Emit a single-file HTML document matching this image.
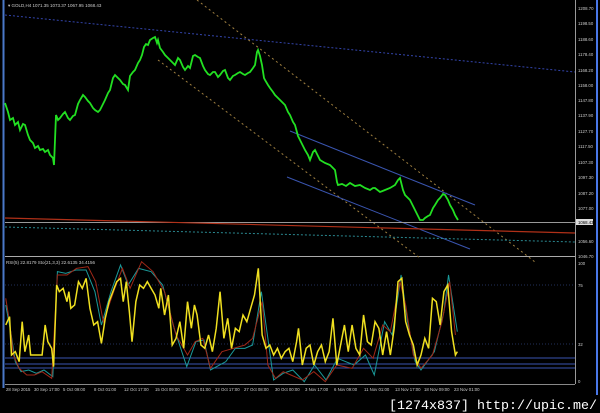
<!DOCTYPE html>
<html><head><meta charset="utf-8"><style>
html,body{margin:0;padding:0;background:#000;width:600px;height:413px;overflow:hidden}
svg{display:block}
text{font-family:"Liberation Sans",sans-serif;fill:#ccc}
</style></head><body>
<svg width="600" height="413" viewBox="0 0 600 413" xmlns="http://www.w3.org/2000/svg">
<rect width="600" height="413" fill="#000"/>
<line x1="3.5" y1="0" x2="3.5" y2="388" stroke="#4a78c8" stroke-width="2"/>
<line x1="597" y1="0" x2="597" y2="395" stroke="#4a78e8" stroke-width="2"/>
<line x1="575.5" y1="0" x2="575.5" y2="384" stroke="#999" stroke-width="1"/>
<line x1="5" y1="256.5" x2="575" y2="256.5" stroke="#aaa" stroke-width="1"/>
<line x1="5" y1="384.5" x2="575" y2="384.5" stroke="#888" stroke-width="1"/>
<line x1="5" y1="15" x2="575" y2="72" stroke="#3344aa" stroke-width="1" stroke-dasharray="2,2"/>
<line x1="197" y1="0" x2="535" y2="262" stroke="#a08040" stroke-width="1" stroke-dasharray="2,3"/>
<line x1="158" y1="60" x2="420" y2="258" stroke="#a08040" stroke-width="1" stroke-dasharray="2,3"/>
<line x1="290" y1="131" x2="475" y2="205" stroke="#3a55b0" stroke-width="1"/>
<line x1="287" y1="177" x2="470" y2="249" stroke="#3a55b0" stroke-width="1"/>
<line x1="5" y1="222.5" x2="575" y2="222.5" stroke="#999" stroke-width="1"/>
<line x1="5" y1="218" x2="575" y2="233" stroke="#b03018" stroke-width="1.2"/>
<line x1="5" y1="227" x2="575" y2="242" stroke="#2a8890" stroke-width="1" stroke-dasharray="2,2"/>
<polyline fill="none" stroke="#22e022" stroke-width="1.8" points="5,103 8,112 10,120 13,118 15,125 18,122 20,130 23,124 25,125 28,135 30,140 33,143 35,148 38,146 40,150 43,149 45,152 48,150 50,155 53,158 54,165 56,115 58,120 60,118 63,114 65,112 68,118 70,120 73,116 75,115 78,104 80,100 83,95 85,97 88,101 90,103 93,108 95,110 98,112 100,110 103,104 105,100 108,93 110,90 113,78 115,75 118,78 120,80 123,84 125,85 128,90 130,76 133,72 135,70 138,63 140,60 142,55 144,47 146,44 148,45 150,40 153,38 155,37 157,43 158,40 160,48 163,52 165,55 168,58 170,60 173,63 175,65 178,58 180,60 183,67 185,70 188,66 190,68 193,56 195,55 198,57 200,58 203,66 205,70 208,74 210,75 213,72 215,72 218,77 220,75 223,71 225,70 228,78 230,80 233,76 235,75 238,73 240,72 243,74 245,75 248,73 250,72 253,68 255,65 257,52 258,50 260,56 262,65 264,78 265,80 268,85 270,88 273,92 275,95 278,98 280,100 283,103 285,105 288,112 290,115 293,122 295,125 298,136 300,140 303,146 305,150 308,155 310,160 313,152 315,150 318,156 320,160 325,163 330,165 333,168 335,170 337,182 338,185 342,184 346,186 350,183 355,186 360,185 365,188 370,190 373,188 375,188 380,192 385,190 390,188 395,185 398,180 400,178 403,190 405,195 408,198 410,200 413,206 415,210 418,216 420,220 423,220 425,218 428,216 430,215 433,208 435,205 438,200 440,198 443,194 445,195 448,200 450,205 453,210 455,215 458,220"/>
<text x="8" y="7" font-size="4.5">▾ GOLD,H4  1071.35 1073.37 1067.95 1068.43</text>
<g font-size="4.3">
<text x="578" y="10">1208.70</text>
<text x="578" y="25">1198.50</text>
<text x="578" y="41">1188.60</text>
<text x="578" y="56">1178.40</text>
<text x="578" y="72">1168.20</text>
<text x="578" y="87">1158.00</text>
<text x="578" y="102">1147.80</text>
<text x="578" y="117">1137.90</text>
<text x="578" y="133">1127.70</text>
<text x="578" y="148">1117.50</text>
<text x="578" y="164">1107.30</text>
<text x="578" y="179">1097.30</text>
<text x="578" y="195">1087.20</text>
<text x="578" y="210">1077.00</text>
<text x="578" y="243">1056.60</text>
<text x="578" y="258">1046.70</text>
<text x="578" y="265">100</text>
<text x="578" y="287">75</text>
<text x="578" y="346">32</text>
<text x="578" y="383">0</text>
</g>
<rect x="576" y="219" width="17" height="6" fill="#ddd"/>
<text x="578" y="224" font-size="4.3" style="fill:#000">1068.43</text>
<text x="6" y="264" font-size="4.5">RSI(5) 22.8179  Sto(21,3,3) 22.6135 34.4156</text>
<line x1="5" y1="285" x2="575" y2="285" stroke="#22305a" stroke-width="1" stroke-dasharray="1,2"/>
<line x1="5" y1="344" x2="575" y2="344" stroke="#22305a" stroke-width="1" stroke-dasharray="1,2"/>
<line x1="5" y1="358" x2="575" y2="358" stroke="#3a55b0" stroke-width="1"/>
<line x1="5" y1="364" x2="575" y2="364" stroke="#3a55b0" stroke-width="1"/>
<line x1="5" y1="368" x2="575" y2="368" stroke="#3a55b0" stroke-width="1"/>
<g transform="translate(0,255) scale(0.3827,0.3333)">
<polyline fill="none" stroke="#1a9a9a" stroke-width="1" vector-effect="non-scaling-stroke" points="15,150 28,230 40,320 55,350 75,345 95,355 115,345 138,365 150,50 172,55 198,45 225,45 248,110 265,210 290,110 315,30 335,90 362,40 395,50 425,90 455,220 488,335 512,260 533,255 550,345 590,320 615,280 640,280 660,270 683,110 715,375 740,355 765,345 795,380 822,330 852,375 882,310 925,330 955,300 978,360 1005,200 1025,240 1048,60 1065,200 1085,320 1100,345 1135,290 1160,170 1172,60 1195,230"/>
<polyline fill="none" stroke="#a02818" stroke-width="1" vector-effect="non-scaling-stroke" points="15,130 25,200 35,300 50,340 70,360 90,360 110,350 135,370 150,60 175,60 200,40 230,35 250,80 270,200 300,100 320,40 340,100 370,20 400,50 430,110 460,240 490,300 510,260 530,250 550,340 580,290 610,280 640,270 660,250 685,140 700,330 720,370 740,350 760,360 790,375 820,350 850,380 880,330 920,340 950,280 975,310 1000,210 1020,230 1045,80 1060,150 1080,300 1100,340 1130,300 1155,200 1175,80 1190,240"/>
<polyline fill="none" stroke="#f0e020" stroke-width="1.5" vector-effect="non-scaling-stroke" points="15,210 25,185 30,300 40,290 50,320 58,200 65,290 75,240 80,300 90,300 100,300 110,300 118,210 125,260 135,280 140,335 148,90 155,110 165,100 175,140 180,110 185,160 195,150 205,80 215,100 225,70 235,160 245,210 255,200 265,265 275,190 285,140 295,110 305,80 315,70 322,140 330,80 338,170 345,260 355,140 365,90 375,100 385,80 395,100 405,120 415,160 420,100 430,180 440,120 450,270 460,250 470,200 480,280 490,140 500,220 508,150 515,180 525,270 535,280 545,240 555,290 565,220 575,110 585,250 595,190 605,280 615,220 625,230 635,180 645,200 655,160 665,120 675,40 685,240 695,280 705,270 715,300 725,280 735,310 745,290 755,280 765,320 775,260 780,220 790,330 800,280 810,270 820,330 830,290 840,270 850,320 860,290 870,190 880,330 890,270 900,210 910,290 920,210 930,280 940,300 950,180 960,260 970,270 980,200 990,220 1000,300 1010,230 1020,300 1030,220 1040,80 1050,70 1060,200 1070,240 1080,270 1090,330 1100,300 1110,250 1120,280 1130,130 1140,140 1150,210 1160,110 1170,90 1180,230 1190,300 1195,290"/>
</g>
<g font-size="4.3">
<text x="6" y="391">28 Sep 2015</text>
<text x="34" y="391">30 Sep 17:00</text>
<text x="63" y="391">5 Oct 09:00</text>
<text x="94" y="391">8 Oct 01:00</text>
<text x="124" y="391">12 Oct 17:00</text>
<text x="155" y="391">15 Oct 09:00</text>
<text x="186" y="391">20 Oct 01:00</text>
<text x="215" y="391">22 Oct 17:00</text>
<text x="244" y="391">27 Oct 08:00</text>
<text x="275" y="391">30 Oct 00:00</text>
<text x="305" y="391">3 Nov 17:00</text>
<text x="334" y="391">6 Nov 09:00</text>
<text x="364" y="391">11 Nov 01:00</text>
<text x="395" y="391">13 Nov 17:00</text>
<text x="424" y="391">18 Nov 09:00</text>
<text x="454" y="391">23 Nov 01:00</text>
</g>
<text x="389" y="409" font-size="13" textLength="208" lengthAdjust="spacingAndGlyphs" style="fill:#fff;font-family:'Liberation Mono',monospace">[1274x837] http://upic.me/</text>
</svg>
</body></html>
